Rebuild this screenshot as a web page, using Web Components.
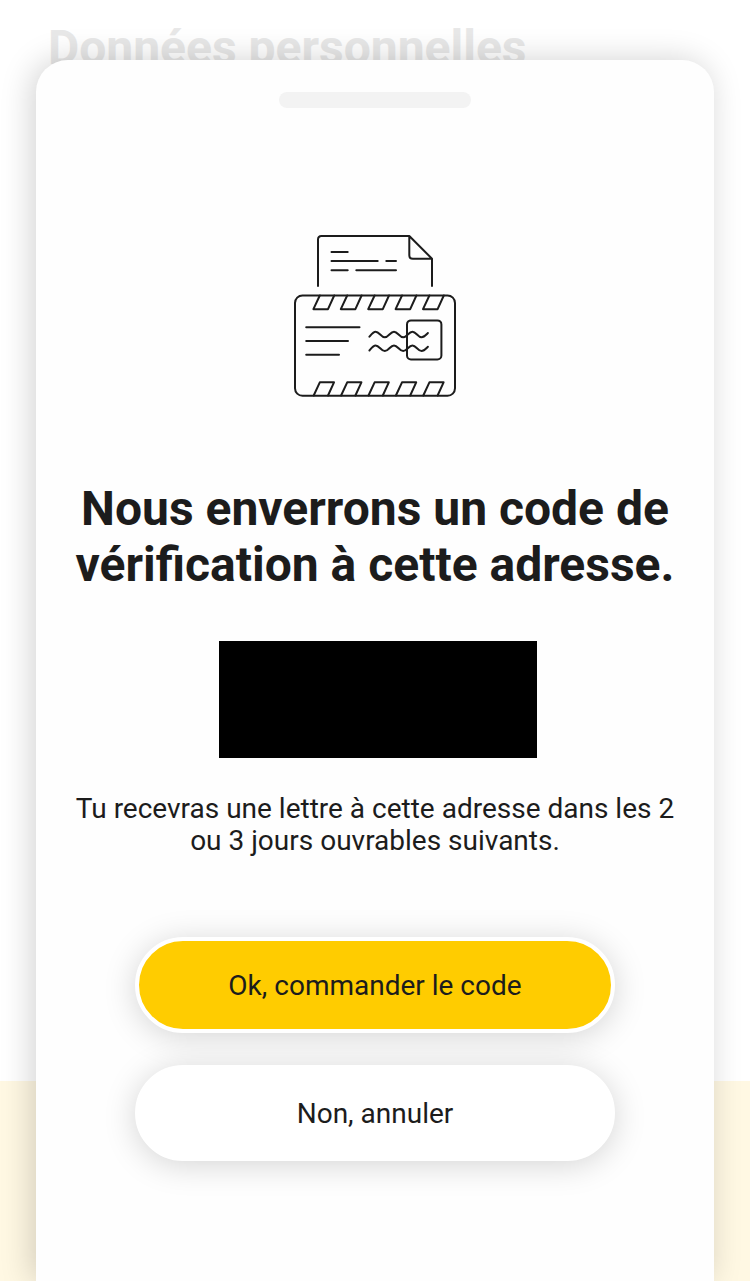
<!DOCTYPE html>
<html lang="fr">
<head>
<meta charset="utf-8">
<meta name="viewport" content="width=device-width">
<title>Données personnelles</title>
<style>
  body {
    margin: 0;
    color: #1c1c1c;
    font-family: Roboto, "Liberation Sans", sans-serif;
  }
</style>
</head>
<body>
<app-screen>
  <span slot="title">Données personnelles</span>
  <bottom-sheet>
    <letter-icon></letter-icon>
    <sheet-message>
      <span slot="heading">Nous enverrons un code de<br>vérification à cette adresse.</span>
      <span slot="text">Tu recevras une lettre à cette adresse dans les 2<br>ou 3 jours ouvrables suivants.</span>
    </sheet-message>
    <pill-button primary slot="actions">Ok, commander le code</pill-button>
    <pill-button slot="actions">Non, annuler</pill-button>
  </bottom-sheet>
</app-screen>

<script>
class BaseElement extends HTMLElement {
  constructor() {
    super();
    this.attachShadow({ mode: 'open' });
    this.shadowRoot.innerHTML = `<style>${this.renderStyle()}</style>${this.render()}`;
  }
}

class AppScreen extends BaseElement {
  render() {
    return `
      <h2><slot name="title"></slot></h2>
      <footer></footer>
      <div class="overlay"><slot></slot></div>
    `;
  }
  renderStyle() {
    return `
      :host {
        position: relative;
        display: flex;
        flex-direction: column;
        justify-content: space-between;
        height: 1281px;
        overflow: hidden;
        background: #fff;
      }
      h2 {
        margin: 0;
        padding: 20px 0 0 48px;
        color: #e8e8e8;
        font-size: 48px;
        line-height: 56px;
        white-space: nowrap;
      }
      footer {
        height: 200px;
        background: #fff8e3;
      }
      .overlay {
        position: absolute;
        inset: 0;
        display: flex;
        padding: 60px 36px 0;
      }
    `;
  }
}
customElements.define('app-screen', AppScreen);

class BottomSheet extends BaseElement {
  render() {
    return `
      <div class="handle"></div>
      <slot></slot>
      <div class="actions"><slot name="actions"></slot></div>
    `;
  }
  renderStyle() {
    return `
      :host {
        display: flex;
        flex: 1;
        flex-direction: column;
        align-items: center;
        box-sizing: border-box;
        padding-top: 32px;
        border-radius: 32px 32px 0 0;
        background: #fefefe;
        box-shadow: -4px 0 32px rgba(0, 0, 0, .18);
      }
      .handle {
        width: 192px;
        height: 16px;
        margin-bottom: 117px;
        border-radius: 8px;
        background: #f3f3f3;
      }
      .actions {
        display: flex;
        flex-direction: column;
        gap: 32px;
        margin-top: 80px;
      }
    `;
  }
}
customElements.define('bottom-sheet', BottomSheet);

class LetterIcon extends BaseElement {
  // slanted stripes along the top and bottom edge of the envelope
  get stripes() {
    return [0, 27.4, 54.8, 82.2, 109.6].map(x => `
      <path transform="translate(${x} 0)" d="M34.8 70.5L28.4 84.2H43L49.2 70.5M28.7 170.5L34.8 157.3H49L43 170.5"/>
    `).join('');
  }
  render() {
    const wave = 'c2.4-2.8 4-5 6.2-5c3.7 0 5.5 5.6 9.2 5.6s5.5-5.6 9.2-5.6s5.5 5.6 9.2 5.6s5.5-5.6 9.2-5.6s5.5 5.6 9.2 5.6c2.6 0 4.2-2.2 6.3-4.3';
    return `
      <svg width="180" height="180" viewBox="0 0 180 180">
        <path d="M33 61V14.5Q33 11 36.5 11H124.3L147 33.7V61M124.3 11V30.2Q124.3 33.7 127.8 33.7H147"/>
        <path d="M46.5 26.9H62.7M46.5 36H92.7M101.3 36H111M46.5 45.2H62.7M71.3 45.2H111"/>
        <rect x="10" y="70.4" width="160" height="100.4" rx="7.5"/>
        ${this.stripes}
        <path d="M21.2 102.3H74.5M21.2 116H63M21.2 129.8H54"/>
        <rect x="122" y="95.4" width="34.4" height="39" rx="4"/>
        <path d="M84.4 111.7${wave}M84.4 125.5${wave}"/>
      </svg>
    `;
  }
  renderStyle() {
    return `
      :host { display: block; height: 180px; }
      svg {
        display: block;
        fill: none;
        stroke: #1c1c1c;
        stroke-width: 2;
        stroke-linecap: round;
        stroke-linejoin: round;
      }
    `;
  }
}
customElements.define('letter-icon', LetterIcon);

class SheetMessage extends BaseElement {
  render() {
    return `
      <h1><slot name="heading"></slot></h1>
      <div class="address"></div>
      <p><slot name="text"></slot></p>
    `;
  }
  renderStyle() {
    return `
      :host {
        display: flex;
        flex-direction: column;
        align-items: center;
        margin-top: 76px;
        text-align: center;
        white-space: nowrap;
      }
      h1 {
        margin: 0 0 48px;
        font-size: 48px;
        line-height: 56px;
      }
      .address {
        width: 318px;
        height: 117px;
        margin-left: 6px;
        background: #000;
      }
      p {
        margin: 35px 0 0;
        font-size: 28px;
        line-height: 32px;
      }
    `;
  }
}
customElements.define('sheet-message', SheetMessage);

class PillButton extends BaseElement {
  render() {
    return `<button><slot></slot></button>`;
  }
  renderStyle() {
    return `
      :host { display: block; }
      button {
        display: block;
        box-sizing: border-box;
        width: 480px;
        height: 96px;
        padding: 2px 0 0;
        border: 4px solid #fff;
        border-radius: 48px;
        background: #fff;
        color: inherit;
        font: 28px/32px Roboto, "Liberation Sans", sans-serif;
        box-shadow: 0 4px 32px rgba(0, 0, 0, .17);
      }
      :host([primary]) button {
        background: #fc0;
      }
    `;
  }
}
customElements.define('pill-button', PillButton);
</script>
</body>
</html>
